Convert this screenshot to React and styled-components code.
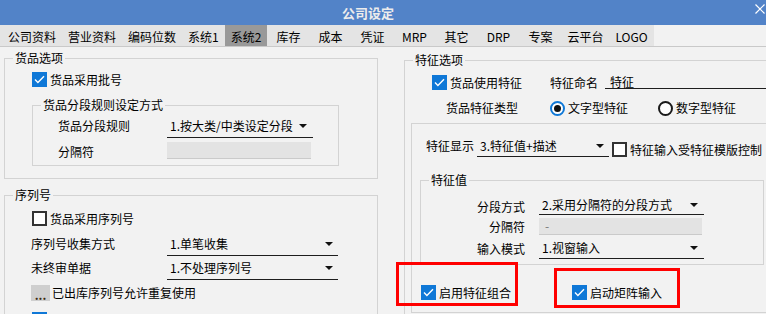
import React from 'react';
import styled, { createGlobalStyle } from 'styled-components';

const GlobalStyle = createGlobalStyle`
  html, body {
    margin: 0;
    padding: 0;
    background: #f2f2f2;
  }
  body {
    font-family: "Noto Sans CJK SC", "Liberation Sans", sans-serif;
    font-size: 12px;
    color: #000;
  }
`;

const Window = styled.div`
  width: 766px;
  height: 314px;
  overflow: hidden;
  background: #f2f2f2;
  display: flex;
  flex-direction: column;
`;

const TitleBar = styled.div`
  height: 25px;
  flex-shrink: 0;
  background: #5283c8;
  display: grid;
  grid-template-columns: 1fr 30px;
  align-items: center;
`;

const Title = styled.div`
  text-align: center;
  font-size: 13px;
  font-weight: bold;
  color: #ececec;
  line-height: 25px;
`;

const CloseButton = styled.div`
  display: flex;
  justify-content: flex-end;
  padding-right: 1px;
  height: 25px;
  align-items: flex-start;
  padding-top: 4px;
  box-sizing: border-box;
`;

const TabStrip = styled.div`
  height: 22px;
  flex-shrink: 0;
  box-sizing: border-box;
  border-bottom: 1px solid #c9c9c9;
  background: #f2f2f2;
  display: flex;
`;

const TabList = styled.div`
  display: flex;
  background: #e4e4e4;
  padding-left: 2px;
`;

const Tab = styled.div`
  height: 21px;
  min-width: 42px;
  box-sizing: border-box;
  padding: 2px 6px 0;
  display: flex;
  align-items: center;
  justify-content: center;
  background: ${(p) => (p.$active ? '#999999' : 'transparent')};
  white-space: nowrap;
`;

const Body = styled.div`
  display: flex;
  gap: 26px;
  padding-left: 4px;
  flex: 1;
  min-height: 0;
`;

const Column = styled.div`
  width: ${(p) => p.$w}px;
  flex-shrink: 0;
`;

const Group = styled.fieldset`
  margin: ${(p) => p.$mt || 0}px 0 0 ${(p) => p.$ml || 0}px;
  padding: 0;
  border: 1px solid #d3d3d3;
  width: ${(p) => p.$w}px;
  height: ${(p) => p.$h}px;
  box-sizing: border-box;
  min-width: 0;
`;

const Legend = styled.legend`
  margin-left: 8px;
  padding: 0 2px;
  height: 16px;
  line-height: 16px;
  white-space: nowrap;
`;

const GroupBody = styled.div`
  padding-left: ${(p) => p.$pl || 0}px;
`;

const InnerBox = styled.div`
  position: relative;
  margin: ${(p) => p.$mt}px 0 0 ${(p) => p.$ml}px;
  width: ${(p) => p.$w}px;
  height: ${(p) => p.$h}px;
  box-sizing: border-box;
  border: 1px solid #d3d3d3;
`;

const Row = styled.div`
  display: flex;
  align-items: ${(p) => p.$align || 'flex-start'};
  margin-top: ${(p) => p.$mt || 0}px;
  margin-left: ${(p) => p.$ml || 0}px;
  padding-left: ${(p) => p.$pl || 0}px;
  height: ${(p) => (p.$h ? `${p.$h}px` : 'auto')};
  white-space: nowrap;
`;

const Label = styled.div`
  width: ${(p) => (p.$w ? `${p.$w}px` : 'auto')};
  flex-shrink: 0;
  line-height: ${(p) => p.$lh || 16}px;
  text-align: ${(p) => (p.$right ? 'right' : 'left')};
  margin-right: ${(p) => p.$mr || 0}px;
  white-space: nowrap;
`;

const CheckItem = styled.div`
  display: flex;
  align-items: center;
  gap: 3px;
  height: 15px;
  line-height: 15px;
  width: ${(p) => (p.$w ? `${p.$w}px` : 'auto')};
  margin-left: ${(p) => p.$ml || 0}px;
  align-self: ${(p) => p.$self || 'auto'};
  flex-shrink: 0;
  white-space: nowrap;
`;

const Box = styled.span`
  width: 15px;
  height: 15px;
  box-sizing: border-box;
  flex-shrink: 0;
  display: inline-flex;
  align-items: center;
  justify-content: center;
  background: ${(p) => (p.$checked ? '#0f78d7' : '#fff')};
  border: ${(p) => (p.$checked ? 'none' : '2px solid #333')};
`;

const Radio = styled.span`
  width: 15px;
  height: 15px;
  box-sizing: border-box;
  border-radius: 50%;
  flex-shrink: 0;
  background: #fff;
  border: 2px solid ${(p) => (p.$checked ? '#0f78d7' : '#1a1a1a')};
  display: inline-flex;
  align-items: center;
  justify-content: center;

  &::after {
    content: '';
    display: ${(p) => (p.$checked ? 'block' : 'none')};
    width: 7px;
    height: 7px;
    border-radius: 50%;
    background: #111;
  }
`;

const RadioItem = styled.div`
  display: flex;
  align-items: center;
  gap: 3px;
  width: ${(p) => (p.$w ? `${p.$w}px` : 'auto')};
  flex-shrink: 0;
  line-height: 16px;
`;

const Select = styled.div`
  width: ${(p) => p.$w}px;
  height: ${(p) => p.$h}px;
  box-sizing: border-box;
  border-bottom: 1px solid #1e1e1e;
  padding: 0 ${(p) => p.$pr || 5}px 0 3px;
  display: flex;
  justify-content: space-between;
  align-items: flex-start;
  flex-shrink: 0;
`;

const SelectText = styled.span`
  line-height: ${(p) => p.$lh}px;
  white-space: nowrap;
`;

const ArrowWrap = styled.span`
  height: ${(p) => p.$lh}px;
  display: flex;
  align-items: center;
`;

const Field = styled.div`
  width: ${(p) => p.$w}px;
  height: ${(p) => p.$h}px;
  box-sizing: border-box;
  background: #e3e3e3;
  border-bottom: 1px solid #cacaca;
  padding-left: 6px;
  line-height: ${(p) => p.$h - 1}px;
  color: #777;
  flex-shrink: 0;
`;

const NameInput = styled.div`
  flex: 1;
  height: 14px;
  box-sizing: border-box;
  border-bottom: 1px solid #1e1e1e;
  padding-left: 5px;
  line-height: 13px;
`;

const DotsButton = styled.span`
  width: 19px;
  height: 16px;
  background: #cfcfcf;
  display: flex;
  align-items: flex-end;
  justify-content: center;
  line-height: 12px;
  font-weight: bold;
  color: #3a2a10;
  margin-right: 2px;
  flex-shrink: 0;
`;

const RedFrame = styled.div`
  position: absolute;
  left: ${(p) => p.$x}px;
  top: ${(p) => p.$y}px;
  width: ${(p) => p.$w}px;
  height: ${(p) => p.$h}px;
  box-sizing: border-box;
  border: 3px solid #ff0000;
  pointer-events: none;
`;

const tabs = ['公司资料', '营业资料', '编码位数', '系统1', '系统2', '库存', '成本', '凭证', 'MRP', '其它', 'DRP', '专案', '云平台', 'LOGO'];

function Check({ checked }) {
  return (
    <Box $checked={checked}>
      {checked && (
        <svg width="11" height="9" viewBox="0 0 11 9">
          <path d="M1 4.6 L3.9 7.4 L10 1.2" fill="none" stroke="#fff" strokeWidth="1.4" />
        </svg>
      )}
    </Box>
  );
}

function Arrow({ lh }) {
  return (
    <ArrowWrap $lh={lh}>
      <svg width="8" height="4" viewBox="0 0 8 4">
        <path d="M0 0 H8 L4 4 Z" fill="#111" />
      </svg>
    </ArrowWrap>
  );
}

function Dropdown({ w, h, lh, pr, children }) {
  return (
    <Select $w={w} $h={h} $pr={pr}>
      <SelectText $lh={lh}>{children}</SelectText>
      <Arrow lh={lh} />
    </Select>
  );
}

export default function App() {
  return (
    <>
      <GlobalStyle />
      <Window>
        <TitleBar>
          <Title>公司设定</Title>
          <CloseButton>
            <svg width="10" height="10" viewBox="0 0 10 10">
              <path d="M0.5 0.5 L9.5 9.5 M9.5 0.5 L0.5 9.5" stroke="#fff" strokeWidth="1.2" />
            </svg>
          </CloseButton>
        </TitleBar>
        <TabStrip>
          <TabList>
            {tabs.map((t) => (
              <Tab key={t} $active={t === '系统2'}>{t}</Tab>
            ))}
          </TabList>
        </TabStrip>
        <Body>
          <Column $w={374}>
            <Group $w={374} $h={129} $mt={3}>
              <Legend>货品选项</Legend>
              <GroupBody $pl={27}>
                <Row $mt={6}>
                  <CheckItem>
                    <Check checked />
                    货品采用批号
                  </CheckItem>
                </Row>
                <Group $w={307} $h={69} $mt={10}>
                  <Legend>货品分段规则设定方式</Legend>
                  <GroupBody $pl={25}>
                    <Row $mt={2}>
                      <Label $w={109} $lh={22}>货品分段规则</Label>
                      <Dropdown w={146} h={23} lh={22} pr={6}>1.按大类/中类设定分段</Dropdown>
                    </Row>
                    <Row $mt={4}>
                      <Label $w={109} $lh={20}>分隔符</Label>
                      <Field $w={144} $h={17} />
                    </Row>
                  </GroupBody>
                </Group>
              </GroupBody>
            </Group>
            <Group $w={374} $h={140} $mt={8}>
              <Legend>序列号</Legend>
              <GroupBody $pl={27}>
                <Row $mt={8}>
                  <CheckItem>
                    <Check />
                    货品采用序列号
                  </CheckItem>
                </Row>
                <Row $mt={7} $ml={-1}>
                  <Label $w={136} $lh={22}>序列号收集方式</Label>
                  <Dropdown w={171} h={23} lh={22}>1.单笔收集</Dropdown>
                </Row>
                <Row $mt={1} $ml={-1}>
                  <Label $w={136} $lh={22}>未终审单据</Label>
                  <Dropdown w={171} h={23} lh={22}>1.不处理序列号</Dropdown>
                </Row>
                <Row $mt={5} $ml={-1} $align="center">
                  <DotsButton>...</DotsButton>
                  <Label $lh={16}>已出库序列号允许重复使用</Label>
                </Row>
                <Row $mt={11}>
                  <Check checked />
                </Row>
              </GroupBody>
            </Group>
          </Column>

          <Column $w={380}>
            <Group $w={380} $h={270} $mt={5}>
              <Legend>特征选项</Legend>
              <GroupBody>
                <Row $mt={7} $pl={27} $h={15}>
                  <CheckItem $w={118}>
                    <Check checked />
                    货品使用特征
                  </CheckItem>
                  <Label $lh={15} $mr={7}>特征命名</Label>
                  <NameInput>特征</NameInput>
                </Row>
                <Row $mt={10} $pl={41} $h={16} $align="center">
                  <Label $w={104} $lh={16}>货品特征类型</Label>
                  <RadioItem $w={108}>
                    <Radio $checked />
                    文字型特征
                  </RadioItem>
                  <RadioItem>
                    <Radio />
                    数字型特征
                  </RadioItem>
                </Row>
                <InnerBox $mt={7} $ml={6} $w={400} $h={190}>
                  <Row $mt={12} $pl={14} $h={21}>
                    <Label $w={51} $lh={20}>特征显示</Label>
                    <Dropdown w={132} h={21} lh={20}>3.特征值+描述</Dropdown>
                    <CheckItem $ml={3} $self="flex-end">
                      <Check />
                      特征输入受特征模版控制
                    </CheckItem>
                  </Row>
                  <Group $w={344} $h={93} $mt={15} $ml={8}>
                    <Legend>特征值</Legend>
                    <GroupBody>
                      <Row $mt={9} $h={18}>
                        <Label $w={104} $lh={20} $right $mr={14}>分段方式</Label>
                        <Dropdown w={165} h={18} lh={16} pr={6}>2.采用分隔符的分段方式</Dropdown>
                      </Row>
                      <Row $mt={3} $h={17}>
                        <Label $w={104} $lh={18} $right $mr={14}>分隔符</Label>
                        <Field $w={163} $h={17}>-</Field>
                      </Row>
                      <Row $mt={5} $h={19}>
                        <Label $w={104} $lh={18} $right $mr={14}>输入模式</Label>
                        <Dropdown w={165} h={19} lh={16} pr={6}>1.视窗输入</Dropdown>
                      </Row>
                    </GroupBody>
                  </Group>
                  <Row $mt={20} $pl={9}>
                    <CheckItem $w={151}>
                      <Check checked />
                      启用特征组合
                    </CheckItem>
                    <CheckItem>
                      <Check checked />
                      启动矩阵输入
                    </CheckItem>
                  </Row>
                  <RedFrame $x={-16} $y={138} $w={122} $h={44} />
                  <RedFrame $x={142} $y={144} $w={126} $h={40} />
                </InnerBox>
              </GroupBody>
            </Group>
          </Column>
        </Body>
      </Window>
    </>
  );
}
